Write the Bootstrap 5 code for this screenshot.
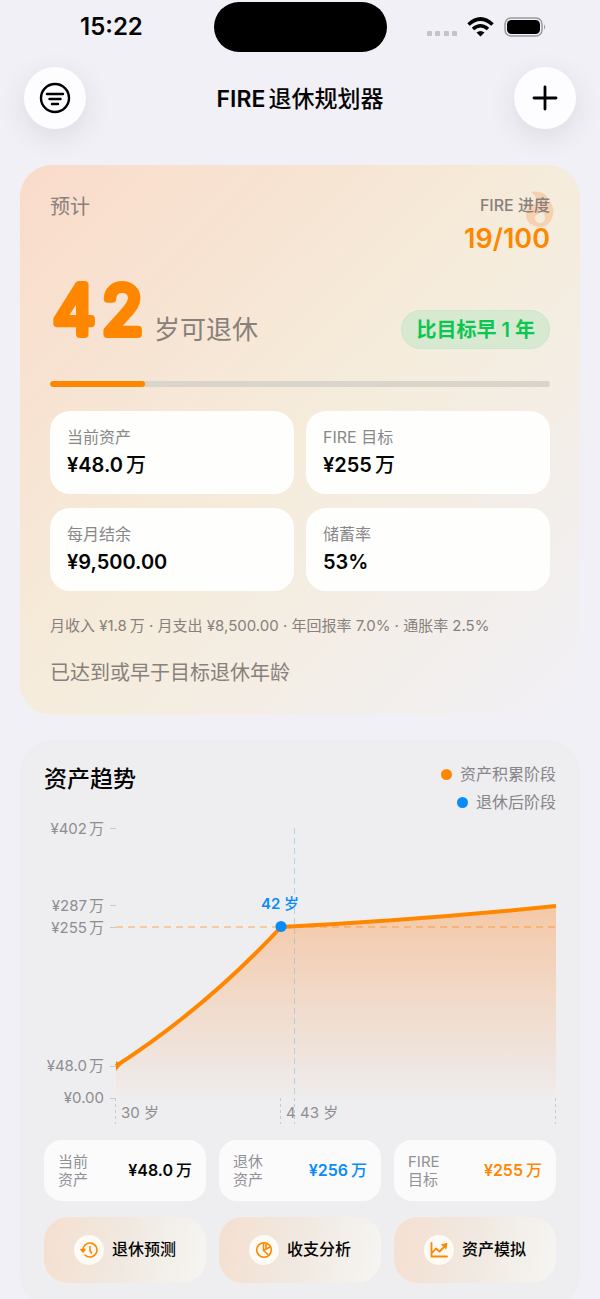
<!DOCTYPE html>
<html lang="zh-CN">
<head>
<meta charset="utf-8">
<meta name="viewport" content="width=device-width, initial-scale=1">
<title>FIRE 退休规划器</title>
<link href="https://cdn.jsdelivr.net/npm/bootstrap@5.3.0/dist/css/bootstrap.min.css" rel="stylesheet">
<style>
  :root { --fire: #ff8700; --sky: #088cfb; --ink-soft: #88858a; }
  body { font-family: Inter, "Noto Sans CJK SC", sans-serif; background: #f1f0f6; color: #050505; line-height: 1.2; }
  button { font-family: inherit; color: inherit; }
  .app-main { scrollbar-width: none; padding: 36px 20px 16px; }
  .app-main::-webkit-scrollbar { display: none; }

  .status-bar { display: grid; grid-template-columns: 1fr auto 1fr; height: 54px; }
  .status-time { font-size: 24px; font-weight: 600; padding-left: 80px; }
  .status-icons { padding-right: 54px; }
  .island { width: 173px; height: 50px; border-radius: 25px; background: #000; }
  .nav-head { padding: 13px 24px 0; }
  .nav-head h1 { font-size: 23px; font-weight: 600; padding-top: 4px; }
  .round-btn { width: 62px; height: 62px; background: #fdfdff; box-shadow: 0 8px 28px rgba(40, 40, 70, .1); }
  .fire { color: var(--fire); }
  .sky { color: var(--sky); }
  .wan { margin-left: 3px; font-weight: 500; }
  .fs-c .wan { font-weight: 400; }

  .hero { border-radius: 32px; padding: 30px; background: linear-gradient(to bottom right, #fadbca, #f5ecdb 50%, #f1f0f6); }
  .hero-note { color: #88807b; }
  .fs-a { font-size: 20px; line-height: 24px; }
  .fs-b { font-size: 16px; line-height: 20px; }
  .fs-c { font-size: 15px; line-height: 22px; }
  .score { font-size: 27px; line-height: 32px; font-weight: 600; margin-top: 8px; }
  .flame { top: 26px; right: 26px; width: 28px; height: 36px; opacity: .25; }
  .age-row { margin-top: 10px; }
  .age { width: 100px; height: 88px; }
  .age text { font-size: 67px; font-weight: 300; fill: var(--fire); stroke: var(--fire); stroke-width: 8; stroke-linejoin: round; stroke-linecap: round; }
  .age-unit { font-size: 26px; line-height: 32px; margin-bottom: 7px; }
  .early { height: 39px; padding: 0 14px; margin-bottom: 4px; font-size: 20px; font-weight: 600; color: #0bc650; background: #d7e9d0; border: 1px solid #c9e7cb; }
  .progress-line { height: 6px; margin-top: 28px; background: #d9d5ca; --bs-progress-bar-bg: var(--fire); }
  .tiles { margin-top: 24px; row-gap: 14px; column-gap: 12px; }
  .tile { height: 83px; padding: 3px 17px 0; border-radius: 20px; background: #fefefc; }
  .tile dt { font-size: 16px; line-height: 22px; font-weight: 400; color: #88888a; }
  .tile dd { font-size: 20px; line-height: 34px; font-weight: 600; }
  .cols-2 { display: grid; grid-template-columns: 1fr 1fr; }
  .cols-3 { display: grid; grid-template-columns: repeat(3, 1fr); gap: 13px; }

  .trend { margin-top: 25px; border-radius: 32px; padding: 24px; background: #eeeef0; }
  .trend h2 { font-size: 23px; line-height: 30px; font-weight: 500; }
  .legend { font-size: 16px; line-height: 20px; color: var(--ink-soft); }
  .legend-dot { width: 11px; height: 11px; }
  .chart { margin-top: 8px; }
  .chart text { font-size: 15px; fill: #8d8d92; }
  .stat { height: 61px; padding: 0 14px; border-radius: 18px; background: #fbfbfc; }
  .stat dt { width: 34px; font-size: 15px; line-height: 18px; font-weight: 400; color: #919196; }
  .stat dd { font-size: 16px; font-weight: 600; }
  .tool { height: 66px; border-radius: 24px; font-size: 16px; font-weight: 500; background: linear-gradient(100deg, #f5dfd0, #f0e9e1 50%, #f6f5f2); }
  .tool-icon { width: 30px; height: 30px; background: #fefaf5; }
  .tools { margin-top: 16px; }
</style>
</head>
<body>
<div class="vh-100 d-flex flex-column overflow-hidden">
  <div class="status-bar align-items-center flex-shrink-0">
    <div class="status-time">15:22</div>
    <div class="island"></div>
    <div class="status-icons d-flex justify-content-end align-items-center">
      <svg width="120" height="24" viewBox="0 0 120 24" aria-hidden="true">
        <g fill="#c3c3c8"><rect x="1" y="16" width="5" height="5" rx="1"/><rect x="9" y="16" width="5" height="5" rx="1"/><rect x="18" y="16" width="5" height="5" rx="1"/><rect x="26" y="16" width="5" height="5" rx="1"/></g>
        <g fill="none" stroke="#000" stroke-width="3.600"><path d="M42.500 9.500Q54.500-1.500 66.500 9.500"/><path d="M47 14Q54.500 7.500 62 14"/></g>
        <path d="M50.500 17.500Q54.500 14.500 58.500 17.500L54.500 21.500Z"/>
        <rect x="79" y="3" width="37" height="18" rx="6" fill="none" stroke="#99999d" stroke-width="1.500"/>
        <rect x="81" y="5" width="33" height="14" rx="4.500"/><path d="M118 9.500q2.500 2.500 0 5z" fill="#99999d"/>
      </svg>
    </div>
  </div>

  <header class="nav-head d-flex align-items-center justify-content-between flex-shrink-0">
    <button class="round-btn btn rounded-circle border-0 p-0 d-flex align-items-center justify-content-center" type="button" aria-label="筛选">
      <svg width="32" height="32" viewBox="0 0 32 32" fill="none" stroke="#000" stroke-width="2.400" stroke-linecap="round"><circle cx="16" cy="16" r="14"/><path d="M8 12h16M10.500 17h11M13 22h6"/></svg>
    </button>
    <h1 class="m-0">FIRE<span class="wan">退休规划器</span></h1>
    <button class="round-btn btn rounded-circle border-0 p-0 d-flex align-items-center justify-content-center" type="button" aria-label="新增">
      <svg width="28" height="28" viewBox="0 0 28 28" fill="none" stroke="#000" stroke-width="2.800" stroke-linecap="round"><path d="M14 3v22M3 14h22"/></svg>
    </button>
  </header>

  <main class="app-main flex-grow-1 overflow-auto">
    <section class="hero position-relative">
      <svg class="flame position-absolute" viewBox="0 0 28 36" aria-hidden="true"><path fill="#ff8030" fill-rule="evenodd" d="M5 1C15-1 22 4 22 10V13C23 12 23 10 23 9C27 14 28 18 27 23C26 31 21 36 14 36C6 36 0 31 0 24C0 18 3 15 7 14C11 12 12 6 5 1ZM14 19C14 23 9 24 9 27C9 30 11 32 14 32C17 32 19 30 19 27C19 23 17 21 14 19Z"/></svg>
      <div class="d-flex justify-content-between position-relative">
        <div class="fs-a hero-note">预计</div>
        <div class="text-end"><div class="fs-b hero-note fw-medium">FIRE 进度</div><div class="score fire">19/100</div></div>
      </div>
      <div class="age-row d-flex align-items-end justify-content-between">
        <div class="d-flex align-items-end">
          <svg class="age" viewBox="0 0 100 88" role="img" aria-label="42"><text x="3 52" y="69">42</text></svg>
          <span class="age-unit hero-note ms-1">岁可退休</span>
        </div>
        <span class="early rounded-pill d-flex align-items-center">比目标早 1 年</span>
      </div>
      <div class="progress progress-line" role="progressbar" aria-label="FIRE 进度" aria-valuenow="19" aria-valuemin="0" aria-valuemax="100"><div class="progress-bar rounded-pill" style="width:19%"></div></div>
      <dl class="tiles cols-2 mb-0">
        <div class="tile d-flex flex-column justify-content-center"><dt>当前资产</dt><dd class="m-0">¥48.0<span class="wan">万</span></dd></div>
        <div class="tile d-flex flex-column justify-content-center"><dt>FIRE 目标</dt><dd class="m-0">¥255<span class="wan">万</span></dd></div>
        <div class="tile d-flex flex-column justify-content-center"><dt>每月结余</dt><dd class="m-0">¥9,500.00</dd></div>
        <div class="tile d-flex flex-column justify-content-center"><dt>储蓄率</dt><dd class="m-0">53%</dd></div>
      </dl>
      <p class="fs-c hero-note mb-0 mt-4 text-nowrap">月收入 ¥1.8<span class="wan">万</span> · 月支出 ¥8,500.00 · 年回报率 7.0% · 通胀率 2.5%</p>
      <p class="fs-a hero-note mb-0 mt-4">已达到或早于目标退休年龄</p>
    </section>

    <section class="trend">
      <div class="d-flex justify-content-between">
        <h2 class="m-0">资产趋势</h2>
        <div class="legend d-flex flex-column align-items-end gap-2">
          <div class="d-flex align-items-center gap-2"><svg class="legend-dot" viewBox="0 0 11 11"><circle cx="5.500" cy="5.500" r="5.500" fill="#ff8700"/></svg>资产积累阶段</div>
          <div class="d-flex align-items-center gap-2"><svg class="legend-dot" viewBox="0 0 11 11"><circle cx="5.500" cy="5.500" r="5.500" fill="#088cfb"/></svg>退休后阶段</div>
        </div>
      </div>
      <svg class="chart d-block w-100" viewBox="0 0 512 312" role="img" aria-label="资产趋势图">
        <defs><linearGradient id="area" gradientUnits="userSpaceOnUse" x1="0" y1="85" x2="0" y2="278"><stop offset="0" stop-color="#ff8a30" stop-opacity=".38"/><stop offset="1" stop-color="#ff8a30" stop-opacity=".02"/></linearGradient></defs>
        <path fill="url(#area)" d="M72 246Q163 187 237 107Q376 100 512 86V268Q512 278 502 278H82Q72 278 72 268Z"/>
        <g stroke="#c9c9cd"><path d="M66 8.500h6M66 85.500h6M66 107.500h6M66 246.500h6M66 278.500h6"/><path stroke-dasharray="3 3" d="M71.500 278v26M236.500 278v26M511.500 278v26"/><path stroke-dasharray="3 3" d="M250.500 278v26"/></g>
        <path stroke="#ff8700" stroke-opacity=".45" stroke-width="1.500" stroke-dasharray="7 5" d="M72 107h440"/>
        <path stroke="#73b9e6" stroke-opacity=".5" stroke-dasharray="6 4" d="M250.500 8v270"/>
        <path fill="none" stroke="#ff8700" stroke-width="4" stroke-linejoin="round" d="M72 246Q163 187 237 107Q376 100 512 86"/>
        <path fill="#ff8700" d="M72 241l5 4-5 6z"/>
        <circle cx="237" cy="106.500" r="5.500" fill="#088cfb"/>
        <g text-anchor="end">
          <text x="60" y="14">¥402<tspan dx="2">万</tspan></text><text x="60" y="91">¥287<tspan dx="2">万</tspan></text><text x="60" y="113">¥255<tspan dx="2">万</tspan></text><text x="60" y="251">¥48.0<tspan dx="2">万</tspan></text><text x="60" y="283">¥0.00</text>
        </g>
        <text x="77" y="298">30 岁</text><text x="242" y="298">4</text><text x="256" y="298">43 岁</text>
        <text x="236" y="89" text-anchor="middle" style="fill:#088cfb;font-weight:600">42 <tspan font-weight="500">岁</tspan></text>
      </svg>
      <dl class="cols-3 mb-0 mt-2">
        <div class="stat d-flex align-items-center justify-content-between"><dt>当前<br>资产</dt><dd class="m-0">¥48.0<span class="wan">万</span></dd></div>
        <div class="stat d-flex align-items-center justify-content-between"><dt>退休<br>资产</dt><dd class="m-0 sky">¥256<span class="wan">万</span></dd></div>
        <div class="stat d-flex align-items-center justify-content-between"><dt>FIRE<br>目标</dt><dd class="m-0 fire">¥255<span class="wan">万</span></dd></div>
      </dl>
      <div class="tools cols-3">
        <button type="button" class="tool border-0 p-0 d-flex align-items-center justify-content-center gap-2"><span class="tool-icon rounded-circle d-flex align-items-center justify-content-center"><svg width="18" height="18" viewBox="0 0 18 18" fill="none" stroke="#ff8700" stroke-width="1.600" stroke-linecap="round" stroke-linejoin="round"><path d="M3 10A7 7 0 1 1 5 14M10 5.500V9.500L11.500 12"/><path fill="#ff8700" d="M1 8.500h4L3 11z"/></svg></span>退休预测</button>
        <button type="button" class="tool border-0 p-0 d-flex align-items-center justify-content-center gap-2"><span class="tool-icon rounded-circle d-flex align-items-center justify-content-center"><svg width="18" height="18" viewBox="0 0 18 18" fill="none" stroke="#ff8700" stroke-width="1.600" stroke-linejoin="round"><circle cx="9" cy="9" r="7.300"/><path d="M8.500 2v7.500l5 4.500M8.500 9.500L15 6M11 2.500v5"/></svg></span>收支分析</button>
        <button type="button" class="tool border-0 p-0 d-flex align-items-center justify-content-center gap-2"><span class="tool-icon rounded-circle d-flex align-items-center justify-content-center"><svg width="18" height="18" viewBox="0 0 18 18" fill="none" stroke="#ff8700" stroke-width="1.800" stroke-linecap="round" stroke-linejoin="round"><path d="M1.500 2v13.500H17M2 12l4-4.500 3.500 3L15 5"/><path fill="#ff8700" stroke-width="1" d="M12 3.500l5-1-1 5z"/></svg></span>资产模拟</button>
      </div>
    </section>
  </main>
</div>
<script src="https://cdn.jsdelivr.net/npm/bootstrap@5.3.0/dist/js/bootstrap.bundle.min.js"></script>
</body>
</html>
